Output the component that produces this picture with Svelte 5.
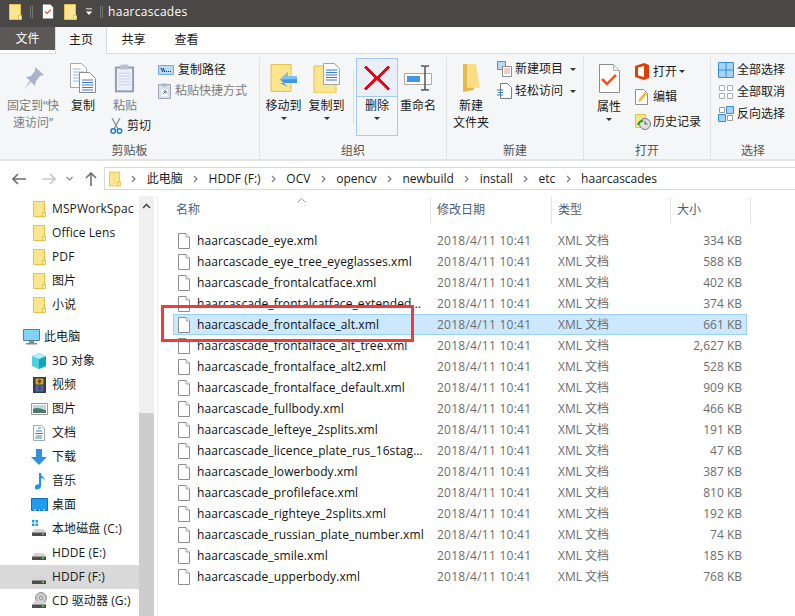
<script>
  // Explorer window: ribbon, address bar, nav pane and the details list.
  const crumbs = ['此电脑', 'HDDF (F:)', 'OCV', 'opencv', 'newbuild', 'install', 'etc', 'haarcascades']
  const favorites = ['MSPWorkSpac', 'Office Lens', 'PDF', '图片', '小说']
  const places = [
    { name: '3D 对象', icon: 'cube' },
    { name: '视频', icon: 'film' },
    { name: '图片', icon: 'photo' },
    { name: '文档', icon: 'text' },
    { name: '下载', icon: 'down' },
    { name: '音乐', icon: 'music' },
    { name: '桌面', icon: 'desk' },
    { name: '本地磁盘 (C:)', icon: 'winhdd' },
    { name: 'HDDE (E:)', icon: 'hdd' },
    { name: 'HDDF (F:)', icon: 'hdd', on: true },
    { name: 'CD 驱动器 (G:)', icon: 'cd' },
  ]
  const files = [
    ['haarcascade_eye.xml', '334 KB'],
    ['haarcascade_eye_tree_eyeglasses.xml', '588 KB'],
    ['haarcascade_frontalcatface.xml', '402 KB'],
    ['haarcascade_frontalcatface_extended.xml', '374 KB'],
    ['haarcascade_frontalface_alt.xml', '661 KB'],
    ['haarcascade_frontalface_alt_tree.xml', '2,627 KB'],
    ['haarcascade_frontalface_alt2.xml', '528 KB'],
    ['haarcascade_frontalface_default.xml', '909 KB'],
    ['haarcascade_fullbody.xml', '466 KB'],
    ['haarcascade_lefteye_2splits.xml', '191 KB'],
    ['haarcascade_licence_plate_rus_16stages.xml', '47 KB'],
    ['haarcascade_lowerbody.xml', '387 KB'],
    ['haarcascade_profileface.xml', '810 KB'],
    ['haarcascade_righteye_2splits.xml', '192 KB'],
    ['haarcascade_russian_plate_number.xml', '74 KB'],
    ['haarcascade_smile.xml', '185 KB'],
    ['haarcascade_upperbody.xml', '768 KB'],
  ]
</script>

{#snippet folder(w, h)}
  <svg width={w} height={h} viewBox="0 0 13 16" class="ic">
    <path d="M.5.5h11v15H.5z" fill="#fde58f" stroke="#e8c04c" />
    <path d="M9.500 11.500h3v4h-3z" fill="#fff3c0" stroke="#e8c04c" />
  </svg>
{/snippet}

{#snippet doc()}
  <svg width="12" height="16" viewBox="0 0 12 16" class="ic">
    <path d="M.5.5h7.500l3.500 3.500v11.500H.5z" fill="#fff" stroke="#8e8e8e" />
    <path d="M8 .5V4h3.500" fill="#f1f1f1" stroke="#a8a8a8" />
  </svg>
{/snippet}

{#snippet navicon(kind)}
  <svg width="18" height="18" viewBox="0 0 18 18" class="ic">
    {#if kind === 'cube'}
      <path d="M8 1l7 3v10l-7 3-7-3V4z" fill="#4fd0e0" />
      <path d="M8 7l7-3v10l-7 3z" fill="#14a3bd" />
      <path d="M8 1l7 3-7 3-7-3z" fill="#b2eef2" />
    {:else if kind === 'film'}
      <path d="M2 1h13v16H2z" fill="#3b3b3b" />
      <path d="M4.500 2.500h8v6h-8z" fill="#c8a92a" />
      <path d="M4.500 9.500h8v6h-8z" fill="#3c6fc4" />
      <path d="M6.500 5l2-2 2 2-2 3zM6.500 12l2-2 2 2-2 3z" fill="#7a3b22" />
    {:else if kind === 'photo'}
      <path d="M.5 3.500h16v11H.5z" fill="#fff" stroke="#9b9b9b" />
      <path d="M2 5h13v4H2z" fill="#bcd7ea" />
      <path d="M2 9c3-2 6-1 13 1v3H2z" fill="#4f7a6a" />
    {:else if kind === 'text'}
      <path d="M2.500 1.500h8l3 3v12h-11z" fill="#fff" stroke="#9fa9b3" />
      <path d="M7 4h3M5 7h6M4 9.500h8M5 12h6M4 14h7" stroke="#3f88c5" stroke-width="1" />
    {:else if kind === 'down'}
      <path d="M5 1h6v8h5l-8 8-8-8h5z" fill="#2f8fe0" />
    {:else if kind === 'music'}
      <path d="M8 1h2c0 4 4 4 4 8-1-2-2-3-4-3v8c0 2-2 3.500-4 3.500S3.500 16 4 14.500 6.500 12 8 12.500z" fill="#1e96e8" />
    {:else if kind === 'desk'}
      <path d="M.5 2.500h16v12H.5z" fill="#1f9bf0" stroke="#0c6fc0" />
      <path d="M3 14h2M8 14h1M12 14h2" stroke="#fff" />
    {:else}
      {#if kind === 'winhdd'}
        <path d="M1 0h2.500v2.500H1zM4.500 0H7v2.500H4.500zM1 3.500h2.500V6H1zM4.500 3.500H7V6H4.500z" fill="#17a0ea" />
      {/if}
      {#if kind === 'cd'}
        <circle cx="10" cy="6" r="5.500" fill="#c9c9c9" stroke="#8f8f8f" />
        <circle cx="10" cy="6" r="1.500" fill="#f2f2f2" stroke="#8f8f8f" />
      {/if}
      <path d="M3.500 9h9l2.500 3.500H1z" fill="#d4d4d4" />
      <path d="M1 12.500h14V16H1z" fill="#4e4e4e" />
      <path d="M11 13.500h2v1.500h-2z" fill="#4ddc4d" />
    {/if}
  </svg>
{/snippet}

<div class="win">
  <header class="title">
    {@render folder(13, 16)}
    <i class="bar"></i>
    <svg width="12" height="15" viewBox="0 0 12 16" class="ic qa"><path d="M.5.500h8l3 3v12H.5z" fill="#fff" /><path d="M3 8l2 2 4-4" fill="none" stroke="#e8501f" stroke-width="1.500" /></svg>
    <span class="qf">{@render folder(13, 16)}</span>
    <svg width="8" height="8" viewBox="0 0 9 9" class="ic drop"><path d="M1 1h7" stroke="#fff" /><path d="M1 4h7L4.500 8z" fill="#fff" /></svg>
    <i class="bar b2"></i>
    <span class="tname">haarcascades</span>
  </header>

  <nav class="tabs">
    <span class="tab file">文件</span>
    <span class="tab home">主页</span>
    <span class="tab">共享</span>
    <span class="tab">查看</span>
  </nav>

  <section class="ribbon">
    <div class="group g1">
      <div class="gbody">
        <div class="big pin">
          <div class="bi">
            <svg width="24" height="24" viewBox="0 0 24 24"><path d="M14 1l9 8-4 1-4 5-1 5-4-4-7 7 6-8-4-4 5-1 4-5z" fill="#aab4c8" /></svg>
          </div>
          <span class="dim">固定到“快<br />速访问”</span>
        </div>
        <div class="big copy">
          <div class="bi">
            <svg width="26" height="30" viewBox="0 0 26 30">
              <path d="M.5.500h11l5 5v19H.5z" fill="#fff" stroke="#a9a9a9" />
              <path d="M3 6h8M3 9h11M3 12h11M3 15h11M3 18h11" stroke="#8fb4e3" />
              <path d="M9.500 9.500h10l6 6v14h-16z" fill="#fff" stroke="#8c8c8c" />
              <path d="M12 17h11M12 19.500h11M12 22h11M12 24.500h11M12 27h11" stroke="#3f7bd0" />
            </svg>
          </div>
          <span>复制</span>
        </div>
        <div class="pastecol">
          <div class="big">
            <div class="bi">
              <svg width="21" height="30" viewBox="0 0 22 30">
                <path d="M1 3h20v27H1z" fill="#8d9bb3" />
                <path d="M3 5h16v23H3z" fill="#e9eef7" />
                <path d="M7 1h8v5H7z" fill="#b5bfce" />
                <path d="M5 10h12M5 13h12M5 16h12M5 19h12M5 22h12" stroke="#c9d3e4" />
              </svg>
            </div>
            <span class="dim">粘贴</span>
          </div>
          <div class="cut">
            <svg width="13" height="16" viewBox="0 0 13 16" class="ic">
              <path d="M2 0l6 11M10 0L4 11" stroke="#8a8f96" stroke-width="1.300" />
              <circle cx="3.200" cy="13" r="2.300" fill="none" stroke="#1d7fd0" stroke-width="1.500" />
              <circle cx="9.500" cy="13" r="2.300" fill="none" stroke="#1d7fd0" stroke-width="1.500" />
            </svg>
            <span>剪切</span>
          </div>
        </div>
        <div class="smalls s1">
          <div class="sm">
            <svg width="16" height="10" viewBox="0 0 16 10" class="ic"><path d="M.5.500h15v9H.5z" fill="#b9daf5" stroke="#74aee0" /><path d="M3 3l2 4M5 3l2 4M8 6.500h1M10 6.500h1M12 6.500h1" stroke="#223" /></svg>
            <span>复制路径</span>
          </div>
          <div class="sm">
            <svg width="13" height="16" viewBox="0 0 13 16" class="ic"><path d="M.5 1.500h12v14H.5z" fill="#d8dfe9" stroke="#9aa6b8" /><path d="M4 .5h5v3H4z" fill="#aab4c4" /><path d="M3.500 6.500h6v7h-6z" fill="#fff" /><path d="M5 11l3-3M5.500 8H8v2.500" fill="none" stroke="#4d6a8d" /></svg>
            <span class="dim">粘贴快捷方式</span>
          </div>
        </div>
      </div>
      <div class="glabel">剪贴板</div>
    </div>

    <div class="group g2">
      <div class="gbody">
        <div class="big w43 move">
          <div class="bi">
            <svg width="28" height="28" viewBox="0 0 28 28">
              <path d="M1 .5h20v27H1z" fill="#fde58f" stroke="#e8c04c" />
              <path d="M10 19H27v-7H18V8L10 15.500 18 23z" fill="#3f97e8" />
              <path d="M10 15.500L18 8v4h9v3z" fill="#7cc0f5" />
            </svg>
          </div>
          <span>移动到</span>
          <i class="caret"></i>
        </div>
        <div class="big w43">
          <div class="bi">
            <svg width="28" height="30" viewBox="0 0 28 30">
              <path d="M1 3h22v27H1z" fill="#fde58f" stroke="#e8c04c" />
              <path d="M10.500.5h11l5 5v16h-16z" fill="#f7f9fc" stroke="#9ea6b0" />
              <path d="M13 7h11M13 9.500h11M13 12h11M13 14.500h11M13 17h11" stroke="#3f7bd0" />
            </svg>
          </div>
          <span>复制到</span>
          <i class="caret"></i>
        </div>
        <i class="gsep"></i>
        <div class="del">
          <div class="deltop">
            <svg width="26" height="26" viewBox="0 0 26 26"><path d="M2 1l11 11L24 1l1.500 1.500L15 13l10.500 10.500L24 25 13 14.500 2 25 .5 23.500 11 13 .5 2.500z" fill="#e3061b" stroke="#e3061b" /></svg>
          </div>
          <span>删除</span>
          <i class="caret"></i>
        </div>
        <div class="big rename">
          <div class="bi">
            <svg width="28" height="26" viewBox="0 0 28 26">
              <path d="M.5 8.500h27v11H.5z" fill="#fff" stroke="#a9a9a9" />
              <path d="M3 11h13v6H3z" fill="#3f97e8" />
              <path d="M17 1h3l1 1 1-1h3M21 2v22M17 25h3l1-1 1 1h3" fill="none" stroke="#555" stroke-width="1.500" />
            </svg>
          </div>
          <span>重命名</span>
        </div>
      </div>
      <div class="glabel">组织</div>
    </div>

    <div class="group g3">
      <div class="gbody">
        <div class="big newf">
          <div class="bi">
            <svg width="19" height="28" viewBox="0 0 19 28">
              <path d="M1 0h11v26l-11 2z" fill="#e7b94a" />
              <path d="M5 0h9l4 24H5z" fill="#fbdd83" />
            </svg>
          </div>
          <span>新建<br />文件夹</span>
        </div>
        <div class="smalls s3">
          <div class="sm">
            <svg width="15" height="16" viewBox="0 0 15 16" class="ic"><path d="M.5.500h8v8h-8z" fill="#bcd9f2" stroke="#5d8fbc" /><path d="M5.500 5.500h9v10h-9z" fill="#fff" stroke="#8e8e8e" /><path d="M7 8h6M7 10h6M7 12h6" stroke="#e39a9a" /></svg>
            <span>新建项目</span><i class="caret in"></i>
          </div>
          <div class="sm">
            <svg width="15" height="16" viewBox="0 0 15 16" class="ic"><path d="M3.500.500h7l4 4v11h-11z" fill="#fff" stroke="#7d7d7d" /><path d="M0 7h6M1 9.500h5M0 12h6" stroke="#2a7fd0" /></svg>
            <span>轻松访问</span><i class="caret in"></i>
          </div>
        </div>
      </div>
      <div class="glabel">新建</div>
    </div>

    <div class="group g4">
      <div class="gbody">
        <div class="big prop">
          <div class="bi">
            <svg width="21" height="29" viewBox="0 0 21 29">
              <path d="M.5.500h14l6 6v22H.5z" fill="#fff" stroke="#8e8e8e" />
              <path d="M14.500.5v6h6" fill="#eee" stroke="#b3b3b3" />
              <path d="M3 15l5 5 9-9" fill="none" stroke="#f0561d" stroke-width="2.500" />
            </svg>
          </div>
          <span>属性</span>
          <i class="caret"></i>
        </div>
        <div class="smalls s4">
          <div class="sm">
            <svg width="15" height="17" viewBox="0 0 15 17" class="ic"><path d="M0 3l9-3 5 2v13l-5 2-9-3z" fill="#e03d08" /><path d="M3 4.500l6-1.500v11l-6-1.500z" fill="#fff" /></svg>
            <span>打开</span><i class="caret in"></i>
          </div>
          <div class="sm">
            <svg width="13" height="16" viewBox="0 0 13 16" class="ic"><path d="M.5.500h8l4 4v11H.5z" fill="#fff" stroke="#8e8e8e" /><path d="M3 13l1-3 6-7 2 2-6 7z" fill="#f2b63c" /></svg>
            <span>编辑</span>
          </div>
          <div class="sm">
            <svg width="16" height="16" viewBox="0 0 16 16" class="ic"><path d="M.5.500h10v13H.5z" fill="#fde58f" stroke="#e8c04c" /><circle cx="10" cy="10" r="5.500" fill="#dfdfdf" stroke="#7a7a7a" /><path d="M10 7v3h2.500" fill="none" stroke="#555" /><path d="M3 11a5 5 0 0 1 5-4" fill="none" stroke="#2f9e33" stroke-width="2" /></svg>
            <span>历史记录</span>
          </div>
        </div>
      </div>
      <div class="glabel">打开</div>
    </div>

    <div class="group g5">
      <div class="gbody">
        <div class="smalls s5">
          <div class="sm">
            <svg width="16" height="16" viewBox="0 0 16 16" class="ic"><path d="M.5.500h15v15H.5z" fill="#a9d3f6" stroke="#2f8fe0" /><path d="M8 0v16M0 8h16" stroke="#2f8fe0" /></svg>
            <span>全部选择</span>
          </div>
          <div class="sm">
            <svg width="16" height="16" viewBox="0 0 16 16" class="ic"><path d="M1.500 1.500h5v5h-5zM9.500 1.500h5v5h-5zM1.500 9.500h5v5h-5zM9.500 9.500h5v5h-5z" fill="#fff" stroke="#b0b0b0" /></svg>
            <span>全部取消</span>
          </div>
          <div class="sm">
            <svg width="16" height="16" viewBox="0 0 16 16" class="ic"><path d="M1.500 1.500h5v5h-5zM9.500 9.500h5v5h-5z" fill="#fff" stroke="#9a9a9a" /><path d="M8.500.500h7v7h-7zM.5 8.500h7v7h-7z" fill="#a9d3f6" stroke="#2f8fe0" /></svg>
            <span>反向选择</span>
          </div>
        </div>
      </div>
      <div class="glabel">选择</div>
    </div>
  </section>

  <div class="addr">
    <svg width="14" height="12" viewBox="0 0 14 12" class="ic back"><path d="M6 1L1 6l5 5M1 6h13" fill="none" stroke="#6e6e6e" stroke-width="1.600" /></svg>
    <svg width="14" height="12" viewBox="0 0 14 12" class="ic fwd"><path d="M8 1l5 5-5 5M13 6H0" fill="none" stroke="#c9c9c9" stroke-width="1.600" /></svg>
    <svg width="7" height="5" viewBox="0 0 7 5" class="ic chev"><path d="M.5 1l3 3 3-3" fill="none" stroke="#8a8a8a" stroke-width="1.200" /></svg>
    <svg width="12" height="14" viewBox="0 0 12 14" class="ic up"><path d="M1 6l5-5 5 5M6 1v13" fill="none" stroke="#6e6e6e" stroke-width="1.600" /></svg>
    <div class="path">
      {@render folder(12, 16)}
      {#each crumbs as c}
        <svg width="5" height="8" viewBox="0 0 5 8" class="ic sep"><path d="M1 1l3 3-3 3" fill="none" stroke="#7d7d7d" stroke-width="1.200" /></svg>
        <span class="crumb">{c}</span>
      {/each}
    </div>
  </div>

  <div class="main">
    <aside class="navpane">
      <div class="navlist">
        {#each favorites as f}
          <div class="nrow">
            <span class="nic">{@render folder(13, 16)}</span>
            <span class="ntext">{f}</span>
          </div>
        {/each}
        <div class="nrow pc">
          <svg width="17" height="16" viewBox="0 0 17 16" class="ic"><path d="M.5.500h16v11H.5z" fill="#7fd3f5" stroke="#5d7f93" /><path d="M6 12h5v2h3v1.500H3V14h3z" fill="#7d8d98" /></svg>
          <span class="ntext">此电脑</span>
        </div>
        {#each places as p}
          <div class="nrow" class:on={p.on}>
            <span class="nic2">{@render navicon(p.icon)}</span>
            <span class="ntext">{p.name}</span>
          </div>
        {/each}
      </div>
      <div class="scroll">
        <svg width="9" height="6" viewBox="0 0 9 6" class="ic sup"><path d="M1 5l3.500-3.500L8 5" fill="none" stroke="#505050" stroke-width="1.600" /></svg>
        <div class="thumb"></div>
      </div>
    </aside>

    <div class="pane">
      <div class="head">
        <div class="hc c-name">名称<svg width="9" height="5" viewBox="0 0 9 5" class="sort"><path d="M.5 4.500l4-4 4 4" fill="none" stroke="#9aa5b1" /></svg></div>
        <div class="hc c-date">修改日期</div>
        <div class="hc c-type">类型</div>
        <div class="hc c-size">大小</div>
      </div>
      <div class="rows">
        {#each files as [name, size], i}
          <div class="row" class:sel={i === 4}>
            <div class="c-name cell">
              {@render doc()}
              <span class="fname">{name}</span>
            </div>
            <div class="c-date cell mute date">2018/4/11 10:41</div>
            <div class="c-type cell mute">XML 文档</div>
            <div class="c-size cell mute num">{size}</div>
          </div>
        {/each}
      </div>
      <div class="redbox"></div>
    </div>
  </div>
</div>

<style>
  :global(body) {
    margin: 0;
    background: #fff;
  }
  .win {
    width: 795px;
    height: 616px;
    overflow: hidden;
    display: flex;
    flex-direction: column;
    font-family: "Open Sans", "Noto Sans CJK SC", sans-serif;
    font-size: 12px;
    line-height: 16px;
    color: #1a1a1a;
  }
  .ic {
    display: block;
    flex: none;
  }

  .title {
    height: 27px;
    flex: none;
    background: #4a4846;
    display: flex;
    align-items: center;
    padding: 0 0 4px 9px;
    box-sizing: border-box;
  }
  .bar {
    width: 1px;
    height: 12px;
    border: 1px solid #77736f;
    border-width: 0 1px;
    margin-left: 8px;
  }
  .qa {
    margin-left: 9px;
  }
  .qf {
    margin-left: 10px;
  }
  .drop {
    margin-left: 8px;
  }
  .b2 {
    margin-left: 7px;
  }
  .tname {
    margin-left: 5px;
    color: #fff;
    font-size: 12px;
    letter-spacing: 0.3px;
  }

  .tabs {
    height: 27px;
    flex: none;
    display: flex;
    box-sizing: border-box;
    border-bottom: 1px solid #dadbdc;
    background: #fff;
  }
  .tab {
    width: 53px;
    text-align: center;
    line-height: 25px;
    box-sizing: border-box;
  }
  .file {
    width: 55px;
    background: #5b5855;
    color: #fff;
    height: 23px;
    line-height: 24px;
  }
  .home {
    width: 52px;
    height: 27px;
    background: #f5f6f7;
    border: 1px solid #dadbdc;
    border-width: 0 1px;
    margin-right: 0;
  }

  .ribbon {
    height: 107px;
    flex: none;
    display: flex;
    background: #f5f6f7;
    border-bottom: 2px solid #e3e4e5;
    box-sizing: border-box;
  }
  .group {
    display: flex;
    flex-direction: column;
    box-sizing: border-box;
    margin-top: 3px;
    border-right: 1px solid #e0e2e4;
  }
  .g1 {
    width: 260px;
  }
  .g2 {
    width: 187px;
  }
  .g3 {
    width: 137px;
  }
  .g4 {
    width: 127px;
  }
  .g5 {
    flex: 1;
    border-right: 0;
  }
  .gbody {
    flex: 1;
    display: flex;
    min-height: 0;
  }
  .glabel {
    height: 16px;
    text-align: center;
    color: #555;
    line-height: 16px;
  }

  .big {
    display: flex;
    flex-direction: column;
    align-items: center;
    text-align: center;
    flex: none;
    line-height: 17px;
  }
  .bi {
    height: 34px;
    margin-top: 4px;
    margin-bottom: 2px;
    display: flex;
    align-items: center;
    justify-content: center;
  }
  .dim {
    color: #7c7c7c;
  }
  .pin {
    width: 60px;
    margin-left: 3px;
  }
  .copy {
    width: 40px;
  }
  .pastecol {
    width: 44px;
    flex: none;
    display: flex;
    flex-direction: column;
    align-items: center;
  }
  .cut {
    display: flex;
    align-items: center;
    gap: 4px;
    margin: 4px 0 0 7px;
    align-self: flex-start;
    white-space: nowrap;
  }
  .smalls {
    display: flex;
    flex-direction: column;
  }
  .sm {
    display: flex;
    align-items: center;
    gap: 4px;
    height: 21px;
  }
  .s1 {
    margin-left: 11px;
    padding-top: 2px;
  }
  .w43 {
    width: 43px;
  }
  .move {
    margin-left: 2px;
  }
  .caret {
    display: block;
    width: 0;
    height: 0;
    border: 3px solid transparent;
    border-top: 3px solid #333;
    border-bottom: 0;
    margin-top: 3px;
  }
  .caret.in {
    margin: 0 0 0 4px;
  }
  .gsep {
    width: 1px;
    height: 55px;
    background: #dfe1e3;
    margin: 13px 2px 0 5px;
  }
  .del {
    width: 42px;
    height: 78px;
    margin-top: 1px;
    box-sizing: border-box;
    border: 1px solid #a3cbf5;
    display: flex;
    flex-direction: column;
    align-items: center;
  }
  .deltop {
    height: 38px;
    width: 100%;
    box-sizing: border-box;
    background: #e8eff7;
    border-bottom: 1px solid #a3cbf5;
    display: flex;
    align-items: center;
    justify-content: center;
    margin-bottom: 1px;
    flex: none;
  }
  .rename {
    width: 40px;
    margin-left: 0;
  }
  .newf {
    width: 48px;
    margin-left: 0;
  }
  .s3 {
    padding-top: 1px;
    margin-left: 2px;
  }
  .s3 .sm {
    height: 22px;
    gap: 3px;
  }
  .prop {
    width: 40px;
    margin-left: 5px;
  }
  .prop .bi {
    margin-bottom: 3px;
  }
  .s4 {
    margin-left: 6px;
    padding-top: 2px;
  }
  .s4 .sm {
    height: 25px;
    display: grid;
    grid-template-columns: 18px auto auto;
    justify-content: start;
    gap: 0;
  }
  .s4 .caret.in {
    margin-left: 2px;
  }
  .s5 {
    margin-left: 7px;
    padding-top: 2px;
  }
  .s5 .sm {
    height: 22px;
    gap: 3px;
  }

  .addr {
    height: 35px;
    flex: none;
    display: flex;
    align-items: center;
    padding: 6px 0;
    box-sizing: border-box;
  }
  .back {
    margin-left: 12px;
  }
  .fwd {
    margin-left: 16px;
  }
  .chev {
    margin-left: 10px;
  }
  .up {
    margin-left: 12px;
  }
  .path {
    margin-left: 7px;
    flex: 1;
    height: 23px;
    border: 1px solid #d9d9d9;
    border-right: 0;
    display: flex;
    align-items: center;
    padding-left: 4px;
    box-sizing: border-box;
  }
  .sep {
    margin: 0 10.4px;
  }

  .main {
    flex: 1;
    min-height: 0;
    display: flex;
  }
  .navpane {
    width: 158px;
    flex: none;
    display: flex;
    border-right: 1px solid #f0f0f0;
    box-sizing: border-box;
  }
  .navlist {
    width: 139px;
    flex: none;
    padding-top: 1px;
  }
  .nrow {
    height: 24px;
    display: flex;
    align-items: center;
    padding-left: 33px;
    white-space: nowrap;
    overflow: hidden;
  }
  .nrow.on {
    background: #d9d9d9;
  }
  .nrow.pc {
    margin-top: 8px;
    padding-left: 23px;
  }
  .pc .ntext {
    margin-left: 4px;
  }
  .nic {
    width: 19px;
    flex: none;
  }
  .nic2 {
    width: 21px;
    margin-left: -2px;
    flex: none;
  }
  .ntext {
    color: #1a1a1a;
    letter-spacing: 0.1px;
  }
  .scroll {
    width: 15px;
    flex: none;
    background: #f0f0f0;
    display: flex;
    flex-direction: column;
  }
  .sup {
    margin: 7px auto 0;
  }
  .thumb {
    margin-top: 204px;
    flex: 1;
    background: #cdcdcd;
  }

  .pane {
    flex: 1;
    position: relative;
    min-width: 0;
  }
  .head {
    height: 29px;
    display: flex;
  }
  .hc {
    box-sizing: border-box;
    border-right: 1px solid #e5e5e5;
    color: #4c607a;
    padding: 5px 0 0 6px;
    margin-top: 1px;
    height: 27px;
    position: relative;
  }
  .sort {
    position: absolute;
    left: 139px;
    top: 1px;
  }
  .c-name {
    width: 273px;
    padding-left: 18px;
  }
  .hc.c-name {
    padding-left: 18px;
  }
  .c-date {
    width: 121px;
  }
  .c-type {
    width: 119px;
  }
  .c-size {
    width: 80px;
  }
  .rows {
    padding-left: 15px;
    padding-top: 5px;
  }
  .row {
    display: flex;
    height: 21px;
    align-items: center;
    width: 574px;
    box-sizing: border-box;
    margin-left: 0;
  }
  .row.sel {
    background: #cce8ff;
    outline: 1px solid #99d1ff;
    outline-offset: -1px;
  }
  .cell {
    box-sizing: border-box;
    white-space: nowrap;
  }
  .row .c-name {
    width: 258px;
    padding: 0 7px 0 5px;
    display: flex;
    align-items: center;
    gap: 7px;
    overflow: hidden;
  }
  .fname {
    min-width: 0;
    overflow: hidden;
    text-overflow: ellipsis;
    color: #111;
    letter-spacing: 0.1px;
  }
  .row .c-date {
    padding-left: 6px;
  }
  .date {
    letter-spacing: 0.25px;
  }
  .row .c-type {
    padding-left: 6px;
  }
  .row .c-size {
    width: 76px;
  }
  .mute {
    color: #6d6d6d;
  }
  .num {
    text-align: right;
    padding-right: 5px;
  }
  .redbox {
    position: absolute;
    left: 3px;
    top: 109px;
    width: 253px;
    height: 37px;
    box-sizing: border-box;
    border: 3px solid #f23a3a;
    pointer-events: none;
  }
</style>
